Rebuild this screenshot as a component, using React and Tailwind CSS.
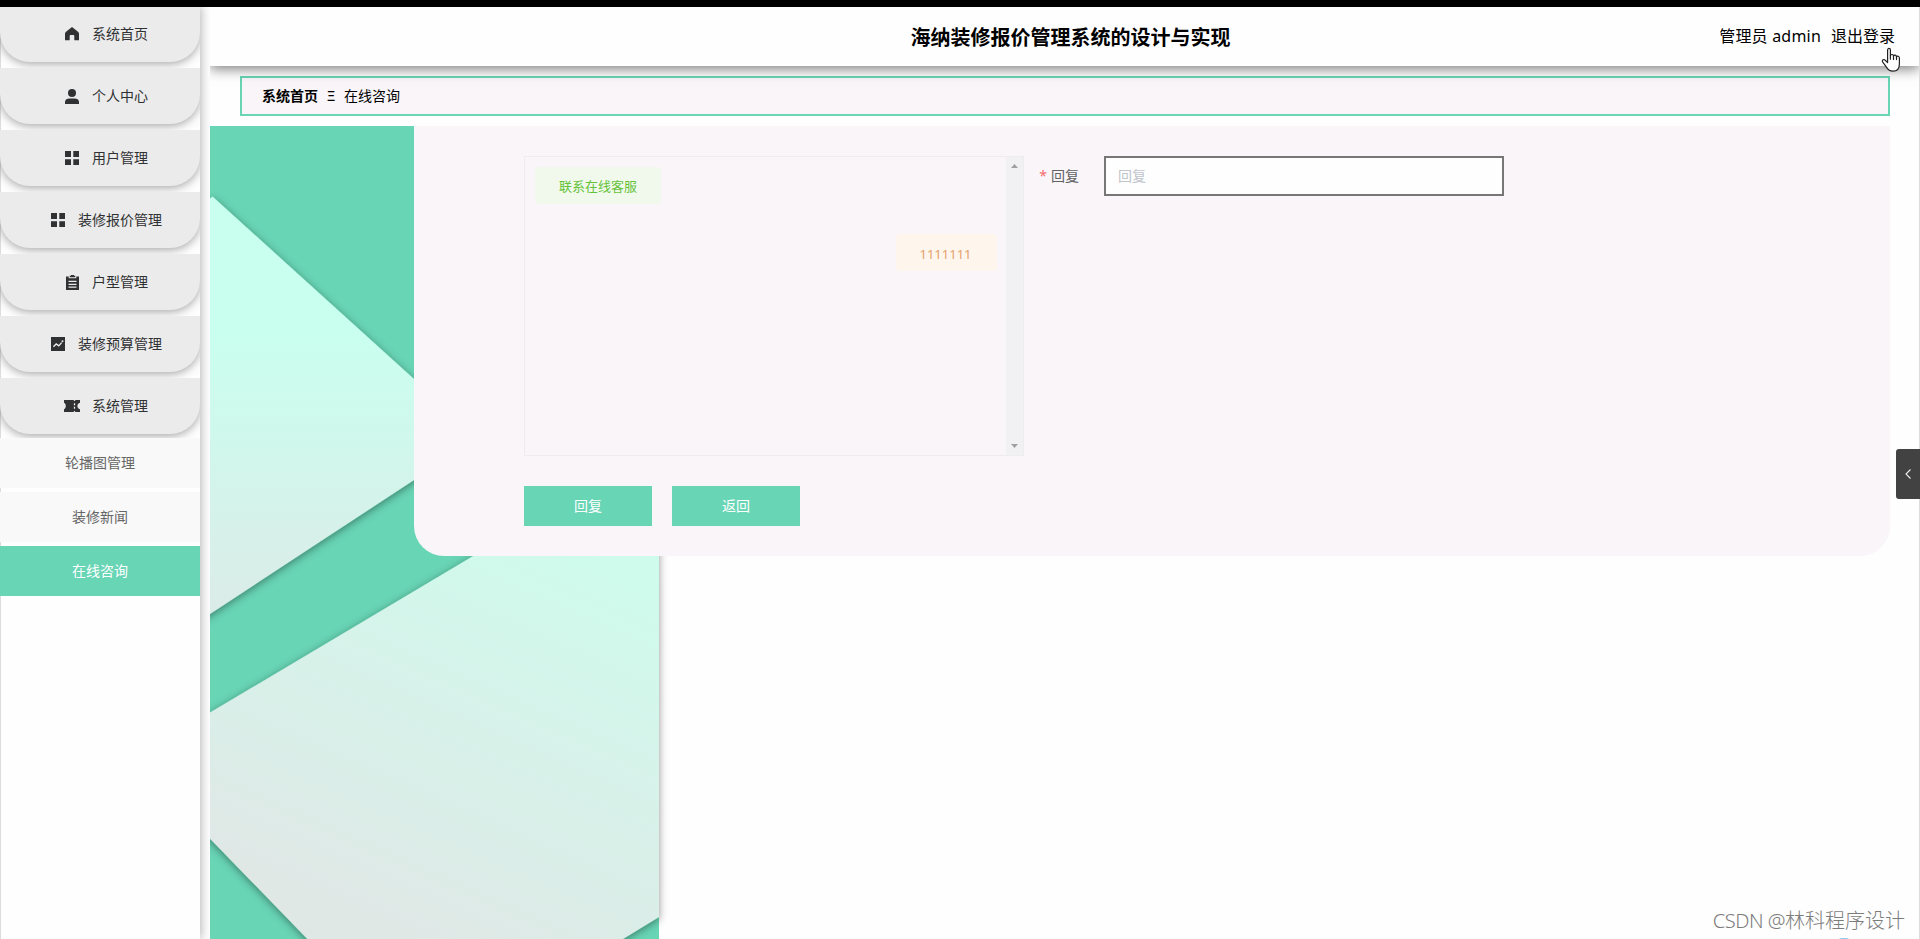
import React, { useState } from 'react';

const HomeIcon = () => (
  <svg className="h-[14px] w-[14px]" viewBox="0 0 14 14" fill="currentColor">
    <path d="M7 0 L13 4.8 C13.7 5.4 14 5.9 14 6.7 V13.2 H9.3 V9.2 C9.3 8.3 9 8 8.2 8 H5.8 C5 8 4.7 8.3 4.7 9.2 V13.2 H0 V6.7 C0 5.9 .3 5.4 1 4.8 Z" />
  </svg>
);

const UserIcon = () => (
  <svg className="h-[15px] w-[14px]" viewBox="0 0 14 15" fill="currentColor">
    <circle cx="7" cy="4" r="4" />
    <path d="M0 15 V13 C0 10.5 2 9.4 4.5 9.4 H9.5 C12 9.4 14 10.5 14 13 V15 Z" />
  </svg>
);

const MenuIcon = () => (
  <svg className="h-[14px] w-[14px]" viewBox="0 0 14 14" fill="currentColor">
    <path d="M0 0H6V6H0Z M8.3 0H14V6H8.3Z M0 8.3H6V14H0Z M8.3 8.3H14V14H8.3Z" />
  </svg>
);

const OrderIcon = () => (
  <svg className="h-[15px] w-[13px]" viewBox="0 0 13 15" fill="currentColor">
    <path
      fillRule="evenodd"
      d="M0 1.5H2.7V3.2H10.3V1.5H13V15H0Z M2.5 5.8V7H10.5V5.8Z M2.5 8.7V9.9H10.5V8.7Z M2.5 11.6V12.8H10.5V11.6Z M3.7 0.8H5V0H8V0.8H9.3V2.2H3.7Z"
    />
  </svg>
);

const MarketingIcon = () => (
  <svg className="h-[14px] w-[14px]" viewBox="0 0 14 14">
    <path d="M0 0H14V14H0Z" fill="currentColor" />
    <path d="M2.4 9.8 L5.2 6.9 L7.8 8.9 L10.6 5.6" fill="none" stroke="#ebebeb" strokeWidth="1.4" />
    <circle cx="11.5" cy="4.3" r="1" fill="#ebebeb" />
  </svg>
);

const TicketIcon = () => (
  <svg className="h-[12px] w-4" viewBox="0 0 16 12" fill="currentColor">
    <path d="M0 0H9.5L10.5 1.3L11.5 0H16V2.8C14.2 3.2 13.4 4.5 13.4 6S14.2 8.8 16 9.2V12H11.5L10.5 10.7L9.5 12H0V9.2C1.2 8.6 1.8 7.4 1.8 6S1.2 3.4 0 2.8Z" />
    <path d="M10.5 3.2V5.2M10.5 6.8V8.8" stroke="#ebebeb" strokeWidth="1.3" />
  </svg>
);

const menus = [
  { name: '系统首页', icon: HomeIcon },
  { name: '个人中心', icon: UserIcon },
  { name: '用户管理', icon: MenuIcon },
  { name: '装修报价管理', icon: MenuIcon },
  { name: '户型管理', icon: OrderIcon },
  { name: '装修预算管理', icon: MarketingIcon },
  { name: '系统管理', icon: TicketIcon },
];

const subMenus = ['轮播图管理', '装修新闻', '在线咨询'];

function Sidebar() {
  const [active, setActive] = useState('在线咨询');

  return (
    <aside className="relative -mt-px w-[200px] shrink-0 border-l border-[#dcdcdc] bg-[#fefefe] text-sm shadow-[1px_0_10px_rgba(0,0,0,0.3)]">
      <ul className="-ml-px">
        {menus.map((m) => (
          <li key={m.name} className="h-[62px] overflow-hidden last:h-[60px]">
            <div className="flex h-14 cursor-pointer items-center justify-center rounded-b-[30px] bg-[#ebebeb] text-[#303133] shadow-[0_2px_10px_rgba(0,0,0,0.35)]">
              <span className="flex w-10 items-center justify-center">
                <m.icon />
              </span>
              <span>{m.name}</span>
            </div>
          </li>
        ))}
      </ul>
      <ul className="-ml-px flex flex-col gap-1">
        {subMenus.map((name) => (
          <li
            key={name}
            onClick={() => setActive(name)}
            className={`flex h-[50px] cursor-pointer items-center justify-center ${active === name ? 'bg-[#68d5b5] text-white' : 'bg-[#f9f9f9] text-[#666]'}`}
          >
            {name}
          </li>
        ))}
      </ul>
    </aside>
  );
}

function Header() {
  return (
    <header className="relative z-10 flex h-[59px] items-center bg-[#fefefe] shadow-[0_3px_12px_rgba(0,0,0,0.5)]">
      <div className="flex-1"></div>
      <h1 className="pl-9 pt-0.5 text-xl font-bold text-black">海纳装修报价管理系统的设计与实现</h1>
      <div className="flex flex-1 justify-end gap-[10px] pb-0.5 pr-6 text-base text-black">
        <span className="tracking-[0.2px]">管理员 admin</span>
        <span className="cursor-pointer">退出登录</span>
      </div>
    </header>
  );
}

// Folded paper backdrop behind the form
function Backdrop() {
  return (
    <svg className="absolute left-0 top-0" width="470" height="813" viewBox="210 126 470 813">
      <defs>
        <linearGradient id="sheetTop" gradientUnits="userSpaceOnUse" x1="0" y1="330" x2="0" y2="620">
          <stop offset="0" stopColor="#c9ffef" />
          <stop offset="1" stopColor="#dcebe7" />
        </linearGradient>
        <linearGradient id="sheetBottom" gradientUnits="userSpaceOnUse" x1="560" y1="540" x2="390" y2="925">
          <stop offset="0" stopColor="#cefbec" />
          <stop offset="0.4" stopColor="#d6f3ea" />
          <stop offset="0.7" stopColor="#daeee8" />
          <stop offset="1" stopColor="#e0e8e6" />
        </linearGradient>
        <filter id="fold" filterUnits="userSpaceOnUse" x="150" y="100" width="600" height="900">
          <feDropShadow dx="0" dy="2" stdDeviation="4" floodColor="#000" floodOpacity="0.42" />
        </filter>
      </defs>
      <rect x="210" y="126" width="449" height="813" fill="#68d5b5" />
      <polygon points="190,216 212.5,196.5 430,393.5 430,469.5 190,627" fill="url(#sheetTop)" filter="url(#fold)" />
      <polygon points="190,724.5 490,546 659,546 659,917 600,953 321,953 190,818" fill="url(#sheetBottom)" filter="url(#fold)" />
    </svg>
  );
}

function ChatBox() {
  return (
    <div className="flex h-[300px] w-[500px] border border-[#efecef]">
      <div className="flex flex-1 flex-col p-[10px] pr-[9px] text-[13px]">
        <div className="flex h-[37px] w-[126px] items-center justify-center self-start rounded bg-[#f0f9eb] pt-px text-[#67c23a]">
          联系在线客服
        </div>
        <div className="mt-[30px] flex h-[37px] w-[101px] items-center justify-center self-end rounded bg-[#fef6ec] pr-0.5 pt-[3px] text-[#e6a06c]">
          1111111
        </div>
      </div>
      <div className="flex w-[17px] flex-col items-center justify-between bg-[#f1f0f2] py-[7px]">
        <svg width="7" height="4" viewBox="0 0 7 4" fill="#a0a0a2">
          <path d="M3.5 0 L7 4 H0 Z" />
        </svg>
        <svg width="7" height="4" viewBox="0 0 7 4" fill="#a0a0a2">
          <path d="M0 0 H7 L3.5 4 Z" />
        </svg>
      </div>
    </div>
  );
}

function ReplyForm() {
  const [reply, setReply] = useState('');

  return (
    <div className="relative ml-[204px] mr-[30px] h-[430px] rounded-b-[30px] bg-[#f9f5f9] pl-[110px] pt-[30px] text-sm">
      <div className="flex">
        <ChatBox />
        <label className="flex h-10 w-20 items-center justify-end pr-[25px] text-[#606266]">
          <span className="mr-1 text-[#f56c6c]">*</span>回复
        </label>
        <input
          className="h-10 w-[400px] border-2 border-[#777] bg-[#fefefe] px-3 pb-0.5 text-sm outline-none placeholder:text-[#c0c4cc]"
          placeholder="回复"
          value={reply}
          onChange={(e) => setReply(e.target.value)}
        />
      </div>
      <div className="mt-[30px] flex gap-5">
        <button className="h-10 w-32 bg-[#68d5b5] text-white">回复</button>
        <button className="h-10 w-32 bg-[#68d5b5] text-white">返回</button>
      </div>
    </div>
  );
}

function App() {
  return (
    <div className="relative h-[939px] w-[1920px] overflow-hidden bg-[#fefefe] font-['Noto_Sans','Noto_Sans_CJK_SC',sans-serif]">
      <div className="relative z-20 h-[7px] bg-black"></div>
      <div className="flex h-[932px]">
        <Sidebar />
        <div className="relative ml-[10px] flex flex-1 flex-col overflow-hidden border-r border-[#dcdcdc] bg-[#fefefe]">
          <Header />
          <nav className="ml-[30px] mr-[29px] mt-[10px] flex h-10 shrink-0 items-center border-2 border-[#68d5b5] bg-[#f9f5f9] pl-5 text-sm text-black">
            <b>系统首页</b>
            <span className="w-[26px] text-center">Ξ</span>
            <span>在线咨询</span>
          </nav>
          <main className="relative -mr-px mt-[10px] flex-1">
            <Backdrop />
            <ReplyForm />
          </main>
        </div>
      </div>

      {/* Side drawer handle */}
      <div className="absolute right-0 top-[449px] z-20 flex h-[50px] w-6 items-center justify-center rounded-l-[3px] bg-[#424242]">
        <svg width="6" height="10" viewBox="0 0 6 10" fill="none" stroke="#eee" strokeWidth="1.1">
          <path d="M5.5 0.5 L1 5 L5.5 9.5" />
        </svg>
      </div>

      {/* Mouse pointer */}
      <svg className="absolute left-[1881px] top-[47px] z-20" width="20" height="26" viewBox="0 0 20 26" fill="#fff" stroke="#222" strokeWidth="1.2" strokeLinejoin="round" strokeLinecap="round">
        <path d="M6.6 15.5 V3 C6.6 .9 9.4 .9 9.4 3 V8.6 C10 7 12.3 7.2 12.5 8.8 C13.3 7.6 15.2 8 15.5 9.6 C16.5 8.6 18.4 9.2 18.4 11 V17 C18.4 21.5 16 24.2 12 24.2 C8.8 24.2 7 22.8 5.6 20.4 L1.6 14.8 C.6 13 3 11.9 4.2 13.2 Z" />
        <path d="M9.4 8.6 V12.2 M12.5 8.8 V12.4 M15.5 9.6 V12.6" fill="none" />
      </svg>

      <div className="absolute bottom-0 right-[15px] flex h-[36px] items-center whitespace-pre text-xl font-light leading-none text-[#7c7c7c]">
        <span className="tracking-[-0.5px]">CSDN @</span>林科程序设计
      </div>
      <div className="absolute left-[1838px] top-[938px] h-2 w-3 rounded-full bg-[#8cc8f0]"></div>
    </div>
  );
}

export default App;
